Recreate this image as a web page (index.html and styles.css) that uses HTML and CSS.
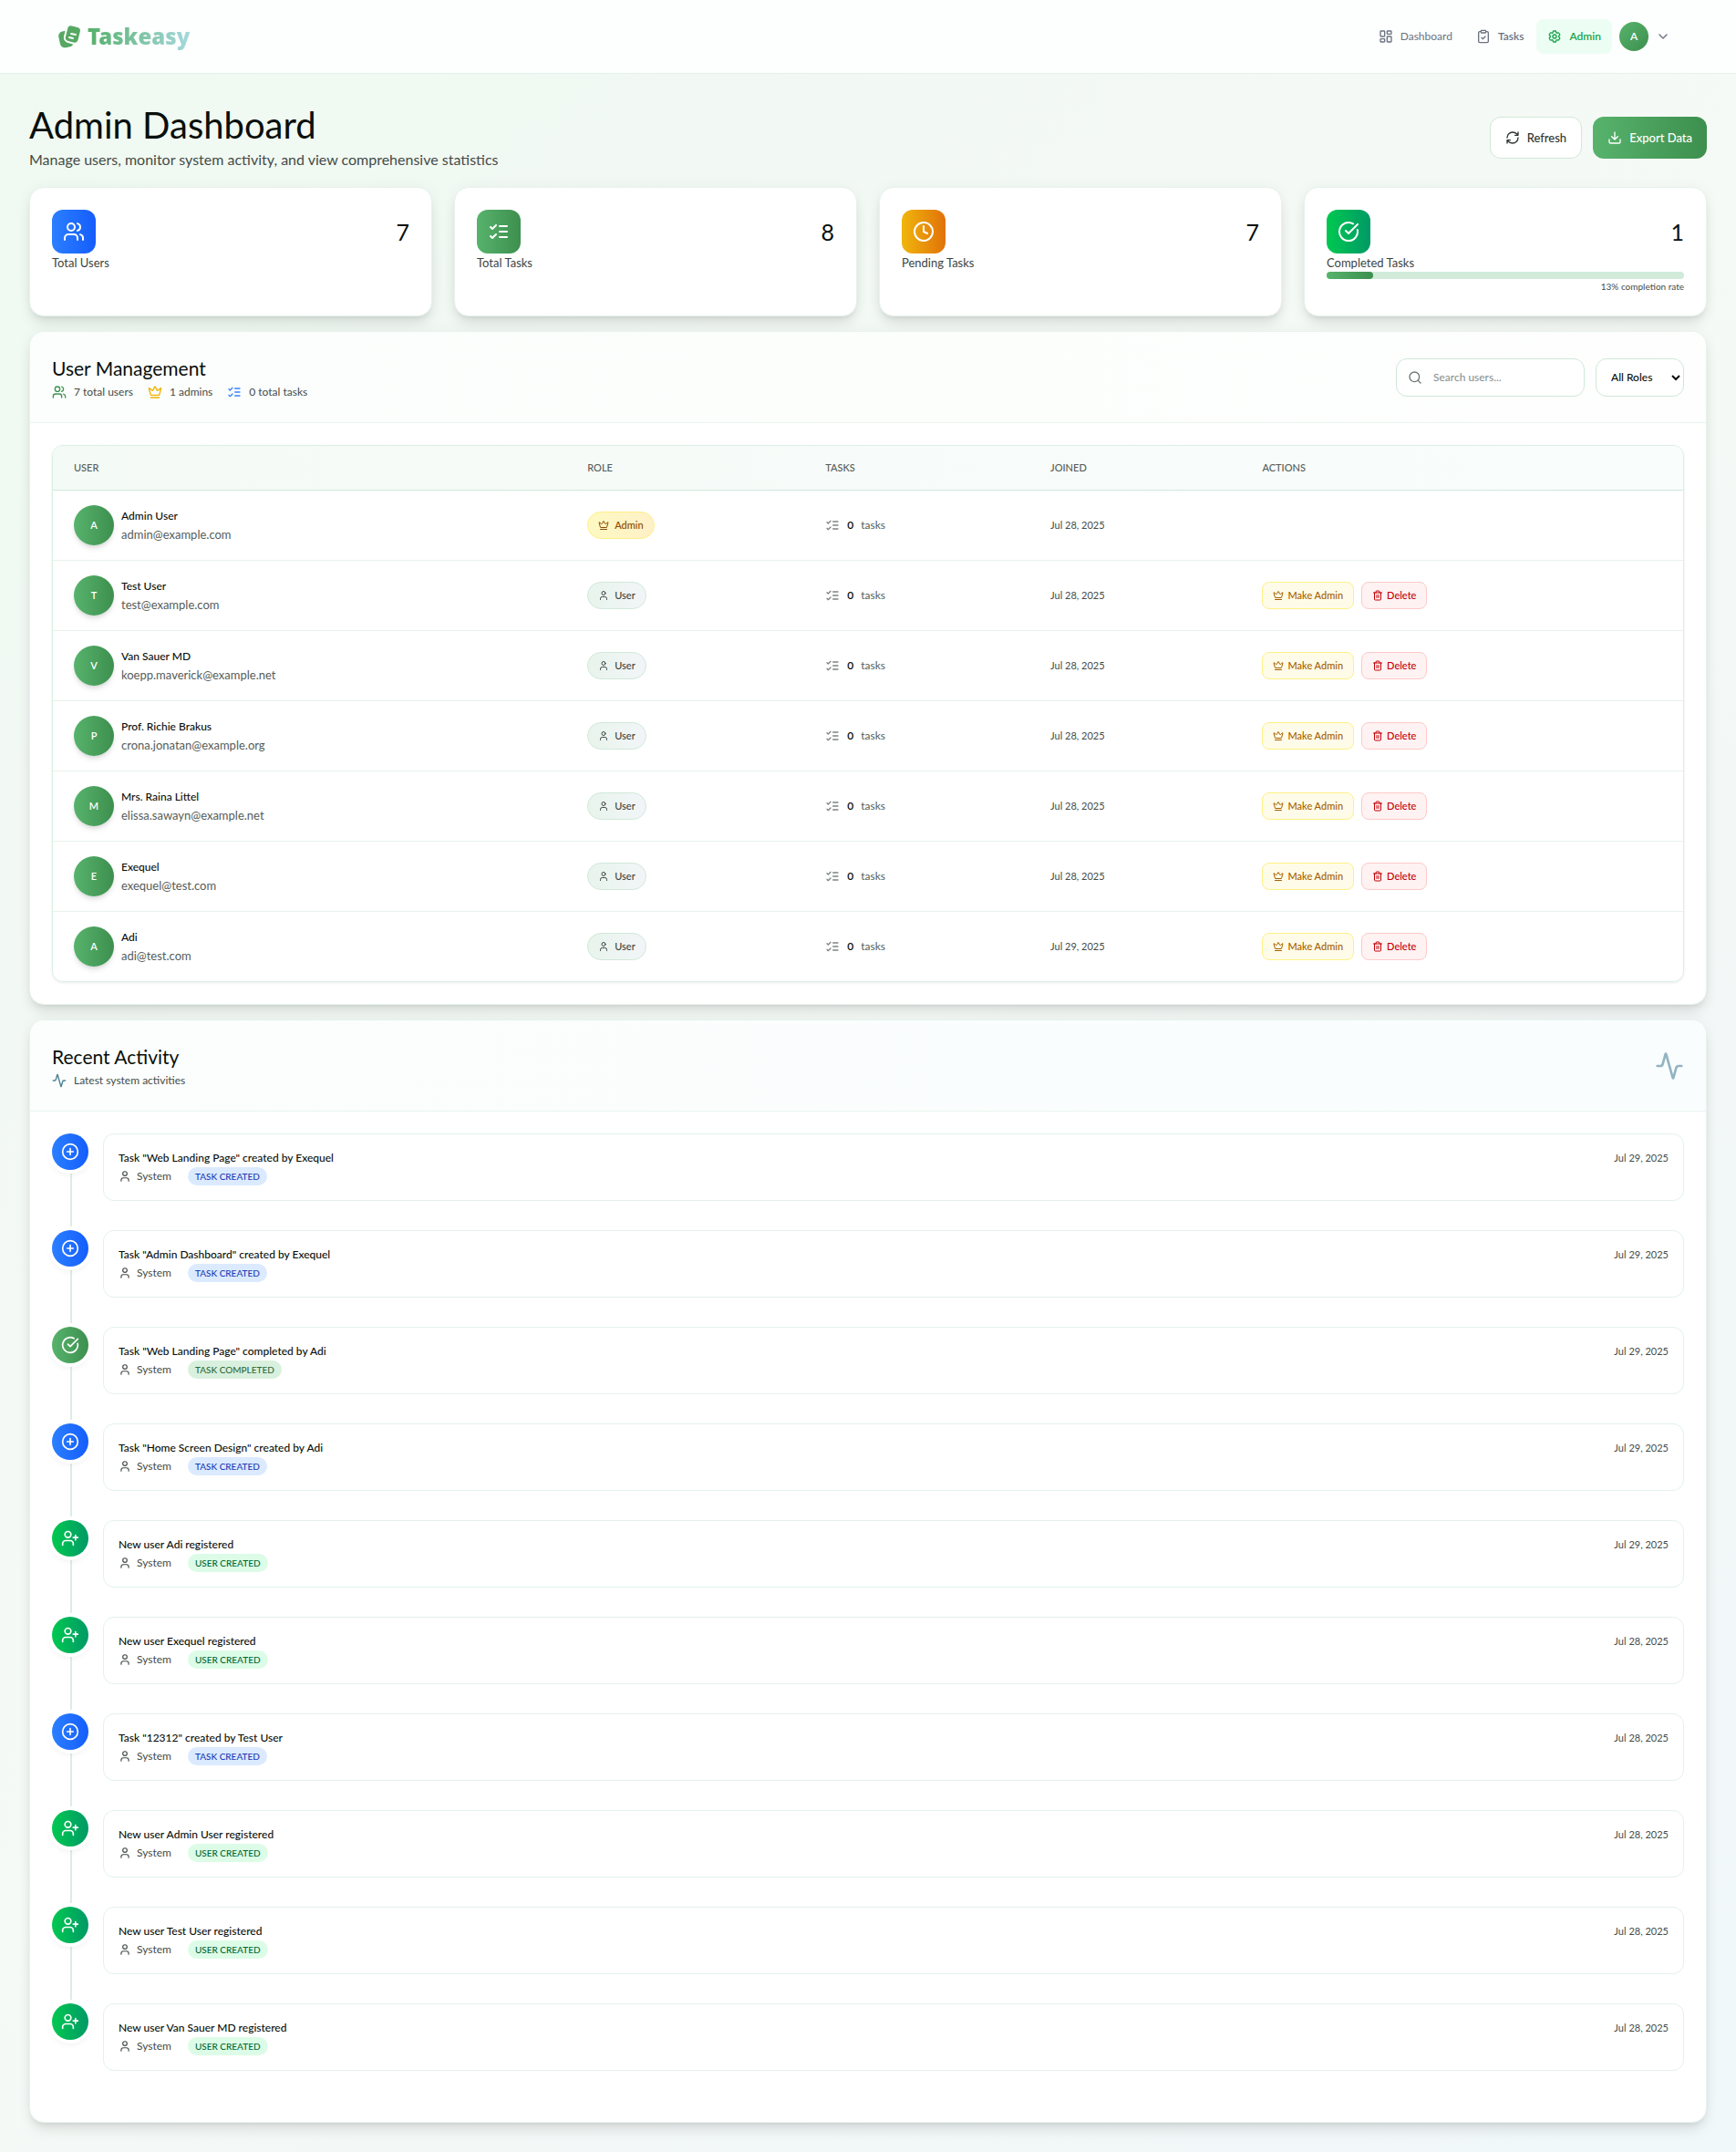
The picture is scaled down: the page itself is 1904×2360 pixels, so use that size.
FILE: index.html
```html
<!DOCTYPE html>
<html lang="en">
<head>
<meta charset="utf-8">
<meta name="viewport" content="width=device-width, initial-scale=1">
<title>Taskeasy - Admin Dashboard</title>
<link rel="stylesheet" href="styles.css">
</head>
<body>
<svg class="sprite" aria-hidden="true">
  <symbol id="users" viewBox="0 0 24 24"><path d="M16 21v-2a4 4 0 0 0-4-4H6a4 4 0 0 0-4 4v2"/><circle cx="9" cy="7" r="4"/><path d="M22 21v-2a4 4 0 0 0-3-3.87M16 3.13a4 4 0 0 1 0 7.75"/></symbol>
  <symbol id="user" viewBox="0 0 24 24"><path d="M19 21v-2a4 4 0 0 0-4-4H9a4 4 0 0 0-4 4v2"/><circle cx="12" cy="7" r="4"/></symbol>
  <symbol id="user-plus" viewBox="0 0 24 24"><path d="M16 21v-2a4 4 0 0 0-4-4H6a4 4 0 0 0-4 4v2"/><circle cx="9" cy="7" r="4"/><path d="M19 8v6M22 11h-6"/></symbol>
  <symbol id="list" viewBox="0 0 24 24"><path d="m3 17 2 2 4-4M3 7l2 2 4-4M13 6h8M13 12h8M13 18h8"/></symbol>
  <symbol id="clock" viewBox="0 0 24 24"><circle cx="12" cy="12" r="10"/><path d="M12 6v6l4 2"/></symbol>
  <symbol id="check" viewBox="0 0 24 24"><path d="M21.801 10A10 10 0 1 1 17 3.335"/><path d="m9 11 3 3L22 4"/></symbol>
  <symbol id="plus" viewBox="0 0 24 24"><circle cx="12" cy="12" r="10"/><path d="M8 12h8M12 8v8"/></symbol>
  <symbol id="crown" viewBox="0 0 24 24"><path d="M11.562 3.266a.5.5 0 0 1 .876 0L15.39 8.87a1 1 0 0 0 1.516.294L21.183 5.5a.5.5 0 0 1 .798.519l-2.834 10.246a1 1 0 0 1-.956.734H5.81a1 1 0 0 1-.957-.734L2.02 6.02a.5.5 0 0 1 .798-.519l4.276 3.664a1 1 0 0 0 1.516-.294zM5 21h14"/></symbol>
  <symbol id="trash" viewBox="0 0 24 24"><path d="M3 6h18M19 6v14a2 2 0 0 1-2 2H7a2 2 0 0 1-2-2V6M8 6V4a2 2 0 0 1 2-2h4a2 2 0 0 1 2 2v2M10 11v6M14 11v6"/></symbol>
  <symbol id="activity" viewBox="0 0 24 24"><path d="M22 12h-2.48a2 2 0 0 0-1.93 1.46l-2.35 8.36a.25.25 0 0 1-.48 0L9.24 2.18a.25.25 0 0 0-.48 0l-2.35 8.36A2 2 0 0 1 4.49 12H2"/></symbol>
  <symbol id="search" viewBox="0 0 24 24"><circle cx="11" cy="11" r="8"/><path d="m21 21-4.3-4.3"/></symbol>
  <symbol id="refresh" viewBox="0 0 24 24"><path d="M3 12a9 9 0 0 1 9-9 9.75 9.75 0 0 1 6.74 2.74L21 8M21 3v5h-5M21 12a9 9 0 0 1-9 9 9.75 9.75 0 0 1-6.74-2.74L3 16M8 16H3v5"/></symbol>
  <symbol id="download" viewBox="0 0 24 24"><path d="M21 15v4a2 2 0 0 1-2 2H5a2 2 0 0 1-2-2v-4M7 10l5 5 5-5M12 15V3"/></symbol>
  <symbol id="dashboard" viewBox="0 0 24 24"><rect x="3" y="3" width="7" height="9" rx="1"/><rect x="14" y="3" width="7" height="5" rx="1"/><rect x="14" y="12" width="7" height="9" rx="1"/><rect x="3" y="16" width="7" height="5" rx="1"/></symbol>
  <symbol id="clipboard" viewBox="0 0 24 24"><rect x="8" y="2" width="8" height="4" rx="1"/><path d="M16 4h2a2 2 0 0 1 2 2v14a2 2 0 0 1-2 2H6a2 2 0 0 1-2-2V6a2 2 0 0 1 2-2h2M9 14l2 2 4-4"/></symbol>
  <symbol id="gear" viewBox="0 0 24 24"><path d="M9.594 3.94c.09-.542.56-.94 1.11-.94h2.593c.55 0 1.02.398 1.11.94l.213 1.281c.063.374.313.686.645.87.074.04.147.083.22.127.325.196.72.257 1.075.124l1.217-.456a1.125 1.125 0 0 1 1.37.49l1.296 2.247a1.125 1.125 0 0 1-.26 1.431l-1.003.827c-.293.241-.438.613-.43.992a7.723 7.723 0 0 1 0 .255c-.008.378.137.75.43.991l1.004.827c.424.35.534.955.26 1.43l-1.298 2.247a1.125 1.125 0 0 1-1.369.491l-1.217-.456c-.355-.133-.75-.072-1.076.124a6.47 6.47 0 0 1-.22.128c-.331.183-.581.495-.644.869l-.213 1.281c-.09.543-.56.94-1.11.94h-2.594c-.55 0-1.019-.398-1.11-.94l-.213-1.281c-.062-.374-.312-.686-.644-.87a6.52 6.52 0 0 1-.22-.127c-.325-.196-.72-.257-1.076-.124l-1.217.456a1.125 1.125 0 0 1-1.369-.49l-1.297-2.247a1.125 1.125 0 0 1 .26-1.431l1.004-.827c.292-.24.437-.613.43-.991a6.932 6.932 0 0 1 0-.255c.007-.38-.138-.751-.43-.992l-1.004-.827a1.125 1.125 0 0 1-.26-1.43l1.297-2.247a1.125 1.125 0 0 1 1.37-.491l1.216.456c.356.133.751.072 1.076-.124.072-.044.146-.086.22-.128.332-.183.582-.495.644-.869l.214-1.28Z"/><circle cx="12" cy="12" r="3"/></symbol>
  <symbol id="chevron" viewBox="0 0 24 24"><path d="m6 9 6 6 6-6"/></symbol>
</svg>

<header class="topbar">
  <a class="brand" href="#">
    <svg class="brand-mark" viewBox="0 0 26 26" aria-hidden="true">
      <rect class="mark-fill" x="1" y="7" width="15" height="18" rx="5" transform="rotate(-12 8 16)"/>
      <rect class="mark-front" x="8" y="1" width="16" height="19" rx="5" transform="rotate(14 16 10)"/>
      <path class="mark-lines" d="m14 10 5 1M12 14l4 1"/>
    </svg>
    <span class="brand-name">Taskeasy</span>
  </a>
  <nav class="nav">
    <a class="nav-link" href="#"><svg class="icon"><use href="#dashboard"/></svg>Dashboard</a>
    <a class="nav-link strong" href="#"><svg class="icon"><use href="#clipboard"/></svg>Tasks</a>
    <a class="nav-link active" href="#"><svg class="icon"><use href="#gear"/></svg>Admin</a>
    <button class="profile" type="button" aria-label="Account menu"><span class="profile-avatar">A</span><svg class="icon"><use href="#chevron"/></svg></button>
  </nav>
</header>

<main class="page">
  <section class="intro">
    <div>
      <h1>Admin Dashboard</h1>
      <p>Manage users, monitor system activity, and view comprehensive statistics</p>
    </div>
    <div class="intro-actions">
      <button class="btn" type="button"><svg class="icon"><use href="#refresh"/></svg>Refresh</button>
      <button class="btn primary" type="button"><svg class="icon"><use href="#download"/></svg>Export Data</button>
    </div>
  </section>

  <section class="stats">
    <article class="stat">
      <div class="stat-top"><span class="stat-icon blue"><svg class="icon-lg"><use href="#users"/></svg></span><span class="stat-value">7</span></div>
      <div class="stat-label">Total Users</div>
    </article>
    <article class="stat">
      <div class="stat-top"><span class="stat-icon green"><svg class="icon-lg"><use href="#list"/></svg></span><span class="stat-value">8</span></div>
      <div class="stat-label">Total Tasks</div>
    </article>
    <article class="stat">
      <div class="stat-top"><span class="stat-icon amber"><svg class="icon-lg"><use href="#clock"/></svg></span><span class="stat-value">7</span></div>
      <div class="stat-label">Pending Tasks</div>
    </article>
    <article class="stat">
      <div class="stat-top"><span class="stat-icon emerald"><svg class="icon-lg"><use href="#check"/></svg></span><span class="stat-value">1</span></div>
      <div class="stat-label">Completed Tasks</div>
      <div class="bar"><div class="bar-fill" style="width:13%"></div></div>
      <div class="bar-note">13% completion rate</div>
    </article>
  </section>

  <section class="card">
    <div class="card-head">
      <div>
        <h2>User Management</h2>
        <div class="meta">
          <span class="meta-item"><svg class="icon c-green"><use href="#users"/></svg>7 total users</span>
          <span class="meta-item"><svg class="icon c-yellow"><use href="#crown"/></svg>1 admins</span>
          <span class="meta-item"><svg class="icon c-blue"><use href="#list"/></svg>0 total tasks</span>
        </div>
      </div>
      <div class="filters">
        <label class="search"><svg class="icon"><use href="#search"/></svg><input type="text" placeholder="Search users..." aria-label="Search users"></label>
        <select class="role-filter" aria-label="Filter by role"><option>All Roles</option><option>Admin</option><option>User</option></select>
      </div>
    </div>
    <div class="card-body">
      <div class="table-wrap">
        <table>
          <colgroup><col class="col-user"><col class="col-role"><col class="col-tasks"><col class="col-joined"><col></colgroup>
          <thead><tr><th>USER</th><th>ROLE</th><th>TASKS</th><th>JOINED</th><th>ACTIONS</th></tr></thead>
          <tbody>
            <tr>
              <td><div class="person"><span class="avatar">A</span><div><div class="name">Admin User</div><div class="email">admin@example.com</div></div></div></td>
              <td><span class="role admin"><svg class="icon-sm"><use href="#crown"/></svg>Admin</span></td>
              <td><div class="count"><svg class="icon"><use href="#list"/></svg><b>0</b>tasks</div></td>
              <td class="date">Jul 28, 2025</td>
              <td></td>
            </tr>
            <tr>
              <td><div class="person"><span class="avatar">T</span><div><div class="name">Test User</div><div class="email">test@example.com</div></div></div></td>
              <td><span class="role"><svg class="icon-sm"><use href="#user"/></svg>User</span></td>
              <td><div class="count"><svg class="icon"><use href="#list"/></svg><b>0</b>tasks</div></td>
              <td class="date">Jul 28, 2025</td>
              <td><div class="actions"><button class="act promote" type="button"><svg class="icon-sm"><use href="#crown"/></svg>Make Admin</button><button class="act delete" type="button"><svg class="icon-sm"><use href="#trash"/></svg>Delete</button></div></td>
            </tr>
            <tr>
              <td><div class="person"><span class="avatar">V</span><div><div class="name">Van Sauer MD</div><div class="email">koepp.maverick@example.net</div></div></div></td>
              <td><span class="role"><svg class="icon-sm"><use href="#user"/></svg>User</span></td>
              <td><div class="count"><svg class="icon"><use href="#list"/></svg><b>0</b>tasks</div></td>
              <td class="date">Jul 28, 2025</td>
              <td><div class="actions"><button class="act promote" type="button"><svg class="icon-sm"><use href="#crown"/></svg>Make Admin</button><button class="act delete" type="button"><svg class="icon-sm"><use href="#trash"/></svg>Delete</button></div></td>
            </tr>
            <tr>
              <td><div class="person"><span class="avatar">P</span><div><div class="name">Prof. Richie Brakus</div><div class="email">crona.jonatan@example.org</div></div></div></td>
              <td><span class="role"><svg class="icon-sm"><use href="#user"/></svg>User</span></td>
              <td><div class="count"><svg class="icon"><use href="#list"/></svg><b>0</b>tasks</div></td>
              <td class="date">Jul 28, 2025</td>
              <td><div class="actions"><button class="act promote" type="button"><svg class="icon-sm"><use href="#crown"/></svg>Make Admin</button><button class="act delete" type="button"><svg class="icon-sm"><use href="#trash"/></svg>Delete</button></div></td>
            </tr>
            <tr>
              <td><div class="person"><span class="avatar">M</span><div><div class="name">Mrs. Raina Littel</div><div class="email">elissa.sawayn@example.net</div></div></div></td>
              <td><span class="role"><svg class="icon-sm"><use href="#user"/></svg>User</span></td>
              <td><div class="count"><svg class="icon"><use href="#list"/></svg><b>0</b>tasks</div></td>
              <td class="date">Jul 28, 2025</td>
              <td><div class="actions"><button class="act promote" type="button"><svg class="icon-sm"><use href="#crown"/></svg>Make Admin</button><button class="act delete" type="button"><svg class="icon-sm"><use href="#trash"/></svg>Delete</button></div></td>
            </tr>
            <tr>
              <td><div class="person"><span class="avatar">E</span><div><div class="name">Exequel</div><div class="email">exequel@test.com</div></div></div></td>
              <td><span class="role"><svg class="icon-sm"><use href="#user"/></svg>User</span></td>
              <td><div class="count"><svg class="icon"><use href="#list"/></svg><b>0</b>tasks</div></td>
              <td class="date">Jul 28, 2025</td>
              <td><div class="actions"><button class="act promote" type="button"><svg class="icon-sm"><use href="#crown"/></svg>Make Admin</button><button class="act delete" type="button"><svg class="icon-sm"><use href="#trash"/></svg>Delete</button></div></td>
            </tr>
            <tr>
              <td><div class="person"><span class="avatar">A</span><div><div class="name">Adi</div><div class="email">adi@test.com</div></div></div></td>
              <td><span class="role"><svg class="icon-sm"><use href="#user"/></svg>User</span></td>
              <td><div class="count"><svg class="icon"><use href="#list"/></svg><b>0</b>tasks</div></td>
              <td class="date">Jul 29, 2025</td>
              <td><div class="actions"><button class="act promote" type="button"><svg class="icon-sm"><use href="#crown"/></svg>Make Admin</button><button class="act delete" type="button"><svg class="icon-sm"><use href="#trash"/></svg>Delete</button></div></td>
            </tr>
          </tbody>
        </table>
      </div>
    </div>
  </section>

  <section class="card">
    <div class="card-head teal">
      <div>
        <h2>Recent Activity</h2>
        <div class="meta"><span class="meta-item"><svg class="icon c-teal"><use href="#activity"/></svg>Latest system activities</span></div>
      </div>
      <svg class="icon-xl"><use href="#activity"/></svg>
    </div>
    <ol class="card-body timeline">
      <li class="event">
        <div class="rail"><span class="dot blue"><svg class="icon-md"><use href="#plus"/></svg></span></div>
        <div class="entry"><div><div class="entry-title">Task "Web Landing Page" created by Exequel</div><div class="entry-meta"><svg class="icon-person"><use href="#user"/></svg><span>System</span><span class="tag">TASK CREATED</span></div></div><time>Jul 29, 2025</time></div>
      </li>
      <li class="event">
        <div class="rail"><span class="dot blue"><svg class="icon-md"><use href="#plus"/></svg></span></div>
        <div class="entry"><div><div class="entry-title">Task "Admin Dashboard" created by Exequel</div><div class="entry-meta"><svg class="icon-person"><use href="#user"/></svg><span>System</span><span class="tag">TASK CREATED</span></div></div><time>Jul 29, 2025</time></div>
      </li>
      <li class="event">
        <div class="rail"><span class="dot green"><svg class="icon-md"><use href="#check"/></svg></span></div>
        <div class="entry"><div><div class="entry-title">Task "Web Landing Page" completed by Adi</div><div class="entry-meta"><svg class="icon-person"><use href="#user"/></svg><span>System</span><span class="tag done">TASK COMPLETED</span></div></div><time>Jul 29, 2025</time></div>
      </li>
      <li class="event">
        <div class="rail"><span class="dot blue"><svg class="icon-md"><use href="#plus"/></svg></span></div>
        <div class="entry"><div><div class="entry-title">Task "Home Screen Design" created by Adi</div><div class="entry-meta"><svg class="icon-person"><use href="#user"/></svg><span>System</span><span class="tag">TASK CREATED</span></div></div><time>Jul 29, 2025</time></div>
      </li>
      <li class="event">
        <div class="rail"><span class="dot emerald"><svg class="icon-md"><use href="#user-plus"/></svg></span></div>
        <div class="entry"><div><div class="entry-title">New user Adi registered</div><div class="entry-meta"><svg class="icon-person"><use href="#user"/></svg><span>System</span><span class="tag joined">USER CREATED</span></div></div><time>Jul 29, 2025</time></div>
      </li>
      <li class="event">
        <div class="rail"><span class="dot emerald"><svg class="icon-md"><use href="#user-plus"/></svg></span></div>
        <div class="entry"><div><div class="entry-title">New user Exequel registered</div><div class="entry-meta"><svg class="icon-person"><use href="#user"/></svg><span>System</span><span class="tag joined">USER CREATED</span></div></div><time>Jul 28, 2025</time></div>
      </li>
      <li class="event">
        <div class="rail"><span class="dot blue"><svg class="icon-md"><use href="#plus"/></svg></span></div>
        <div class="entry"><div><div class="entry-title">Task "12312" created by Test User</div><div class="entry-meta"><svg class="icon-person"><use href="#user"/></svg><span>System</span><span class="tag">TASK CREATED</span></div></div><time>Jul 28, 2025</time></div>
      </li>
      <li class="event">
        <div class="rail"><span class="dot emerald"><svg class="icon-md"><use href="#user-plus"/></svg></span></div>
        <div class="entry"><div><div class="entry-title">New user Admin User registered</div><div class="entry-meta"><svg class="icon-person"><use href="#user"/></svg><span>System</span><span class="tag joined">USER CREATED</span></div></div><time>Jul 28, 2025</time></div>
      </li>
      <li class="event">
        <div class="rail"><span class="dot emerald"><svg class="icon-md"><use href="#user-plus"/></svg></span></div>
        <div class="entry"><div><div class="entry-title">New user Test User registered</div><div class="entry-meta"><svg class="icon-person"><use href="#user"/></svg><span>System</span><span class="tag joined">USER CREATED</span></div></div><time>Jul 28, 2025</time></div>
      </li>
      <li class="event">
        <div class="rail"><span class="dot emerald"><svg class="icon-md"><use href="#user-plus"/></svg></span></div>
        <div class="entry"><div><div class="entry-title">New user Van Sauer MD registered</div><div class="entry-meta"><svg class="icon-person"><use href="#user"/></svg><span>System</span><span class="tag joined">USER CREATED</span></div></div><time>Jul 28, 2025</time></div>
      </li>
    </ol>
  </section>
</main>
</body>
</html>
```
FILE: styles.css
```css
* { box-sizing: border-box; }

body {
  margin: 0;
  min-height: 100vh;
  font-family: Lato, "Open Sans", sans-serif;
  font-size: 13px;
  line-height: 20px;
  color: #0a0f0b;
  background: linear-gradient(135deg, #effaf1 0%, #f2f8f4 25%, #f5faf7 50%, #f2f7f7 75%, #f1f8fa 100%);
}

h1, h2, p, ol { margin: 0; padding: 0; }
h1, h2 { font-weight: 400; }
button, input, select { font: inherit; color: inherit; }
a { color: inherit; text-decoration: none; }

.sprite { display: none; }
.icon, .icon-sm, .icon-md, .icon-lg, .icon-xl, .icon-person {
  flex: none;
  fill: none;
  stroke: currentColor;
  stroke-width: 2;
  stroke-linecap: round;
  stroke-linejoin: round;
}
.icon { width: 16px; height: 16px; }
.icon-sm { width: 12px; height: 12px; }
.icon-person { width: 14px; height: 14px; }
.icon-md { width: 20px; height: 20px; }
.icon-lg { width: 24px; height: 24px; }
.icon-xl { width: 32px; height: 32px; color: #93b4c2; }

/* Top bar */
.topbar {
  display: flex;
  align-items: center;
  justify-content: space-between;
  padding: 20px 64px;
  background: #fdfefe;
  border-bottom: 1px solid #e3f2ea;
}
.brand { display: flex; align-items: center; gap: 6px; }
.brand-mark { width: 26px; height: 26px; }
.mark-fill { fill: #56a863; }
.mark-front { fill: #56a863; stroke: #fdfefe; stroke-width: 2; }
.mark-lines { fill: none; stroke: #fdfefe; stroke-width: 2; stroke-linecap: round; }
.brand-name {
  font: 900 24px/32px "Noto Sans", sans-serif;
  background: linear-gradient(90deg, #55b06a, #a5d8dc);
  background-clip: text;
  color: transparent;
}
.nav { display: flex; align-items: center; gap: 2px; font-size: 12px; }
.nav-link {
  display: flex;
  align-items: center;
  gap: 8px;
  height: 38px;
  padding: 0 12px;
  border-radius: 8px;
  color: #6b7280;
}
.nav-link.strong { font-weight: 600; }
.nav-link.active { font-weight: 600; color: #16a34a; background: #ecfdf3; }
.profile {
  display: flex;
  align-items: center;
  gap: 8px;
  height: 40px;
  padding: 0 8px 0 6px;
  border: 0;
  background: none;
  color: #6b7280;
}
.profile-avatar {
  display: grid;
  place-items: center;
  width: 32px;
  height: 32px;
  border-radius: 50%;
  color: #fff;
  font-size: 12px;
  font-weight: 600;
  background: linear-gradient(135deg, #57b36c, #3d8f4e);
}

/* Page */
.page { display: flex; flex-direction: column; gap: 16px; padding: 32px; }
.intro { display: flex; align-items: center; justify-content: space-between; }
.intro h1 { font-size: 40px; line-height: 48px; }
.intro p { font-size: 16px; line-height: 28px; color: #454b47; }
.intro-actions { display: flex; gap: 12px; }
.btn {
  display: flex;
  align-items: center;
  gap: 8px;
  height: 46px;
  padding: 0 16px;
  border: 1px solid #d0e8d9;
  border-radius: 12px;
  background: #fff;
  color: #2e3430;
  font-weight: 500;
}
.btn.primary { border: 0; color: #fff; background: linear-gradient(90deg, #57b36c, #3d8f4e); }

.blue { background: linear-gradient(90deg, #2b7fff, #155dfc); }
.green { background: linear-gradient(90deg, #57b36c, #3d8f4e); }
.amber { background: linear-gradient(90deg, #f0b60d, #e17209); }
.emerald { background: linear-gradient(90deg, #00c950, #009966); }

.stats { display: grid; grid-template-columns: repeat(4, 1fr); gap: 24px; }
.stat, .card {
  background: #fff;
  border: 1px solid #e6f3eb;
  border-radius: 16px;
  box-shadow: 0 10px 15px -3px rgba(0, 0, 0, .1), 0 4px 6px -4px rgba(0, 0, 0, .1), 0 0 16px rgba(20, 60, 35, .04);
}
.stat { padding: 24px; }
.stat-top { display: flex; align-items: center; justify-content: space-between; }
.stat-icon { display: grid; place-items: center; width: 48px; height: 48px; border-radius: 12px; color: #fff; }
.stat-value { font-size: 25px; line-height: 32px; }
.stat-label { color: #3d4440; }
.bar { height: 8px; border-radius: 4px; background: #d1ead9; }
.bar-fill { height: 8px; border-radius: 4px; background: linear-gradient(90deg, #57b36c, #3d8f4e); }
.bar-note { font-size: 10px; line-height: 16px; text-align: right; color: #454b47; }

/* Cards */
.card-head {
  display: flex;
  align-items: center;
  justify-content: space-between;
  height: 100px;
  padding: 0 24px;
  border-bottom: 1px solid #e8f5ef;
  border-radius: 15px 15px 0 0;
  background: linear-gradient(90deg, #fbfefc, #fdfefd);
}
.card-head.teal { background: linear-gradient(90deg, #fbfefc, #fafdfe); }
.card-head h2 { font-size: 21px; line-height: 32px; }
.meta { display: flex; gap: 16px; font-size: 12px; color: #454b47; }
.meta-item { display: flex; align-items: center; gap: 8px; }
.c-green { color: #3f9352; }
.c-yellow { color: #f0b100; }
.c-blue { color: #3b82f6; }
.c-teal { color: #4b8197; }
.card-body { padding: 24px; }

.filters { display: flex; gap: 12px; font-size: 12px; }
.search, .role-filter {
  height: 42px;
  border: 1px solid #d0e8d9;
  border-radius: 12px;
  background: #fff;
}
.search { display: flex; align-items: center; gap: 12px; width: 207px; padding: 0 12px; color: #6f7572; }
.search input { flex: 1; min-width: 0; padding: 0; border: 0; outline: 0; background: none; }
.search input::placeholder { color: #858b88; }
.role-filter { width: 97px; padding: 0 0 0 12px; font-weight: 500; }

/* User table */
.table-wrap {
  overflow: hidden;
  border: 1px solid #dcefe4;
  border-radius: 12px;
  box-shadow: 0 1px 3px rgba(0, 0, 0, .08);
}
table { width: 100%; table-layout: fixed; border-collapse: separate; border-spacing: 0; }
.col-user { width: 31.5%; }
.col-role { width: 14.6%; }
.col-tasks { width: 13.8%; }
.col-joined { width: 13%; }
thead tr { background: linear-gradient(90deg, #f4faf6, #f7fbf9 50%, #f9fdfc); }
th {
  height: 49px;
  padding: 0 23px;
  border-bottom: 1px solid #d0e8dc;
  font-size: 11px;
  font-weight: 500;
  text-align: left;
  color: #565d59;
}
td { height: 77px; padding: 0 23px; border-bottom: 1px solid #e6f3ec; }
tbody tr:last-child td { height: 76px; border-bottom: 0; }
.person { display: flex; align-items: center; gap: 8px; }
.avatar {
  display: grid;
  place-items: center;
  width: 44px;
  height: 44px;
  border-radius: 50%;
  color: #fff;
  font-size: 11px;
  font-weight: 600;
  background: linear-gradient(90deg, #57b36c, #3d8f4e);
  box-shadow: 0 4px 6px -1px rgba(0, 0, 0, .12), 0 2px 4px -2px rgba(0, 0, 0, .1);
}
.name { font-size: 12px; font-weight: 500; }
.email { color: #565d59; }
.role, .act {
  display: inline-flex;
  align-items: center;
  height: 30px;
  padding: 0 11px;
  border: 1px solid;
  font-size: 11px;
  font-weight: 500;
}
.role {
  gap: 6px;
  border-radius: 15px;
  border-color: #d0e8d9;
  color: #3d4440;
  background: linear-gradient(90deg, #e8f4ec, #f2f5f8);
}
.role.admin { border-color: #fff085; color: #894b00; background: linear-gradient(90deg, #fef9c2, #fef0c7); }
.count { display: flex; align-items: center; gap: 8px; font-size: 12px; color: #565d59; }
.count .icon { color: #7d8480; }
.count b { font-weight: 600; color: #0a0f0b; }
.date { font-size: 11px; color: #454b47; }
.actions { display: flex; gap: 8px; }
.act { gap: 4px; border-radius: 8px; }
.promote { border-color: #fff085; color: #a65f00; background: #fefce8; }
.delete { border-color: #ffc9c9; color: #c10007; background: #fef2f2; }

/* Timeline */
.timeline { list-style: none; }
.event { display: flex; gap: 16px; padding-bottom: 32px; background: linear-gradient(#dceee3, #dceee3) 20px 44px / 2px calc(100% - 48px) no-repeat; }
.event:last-child { background: none; }
.rail { flex: none; width: 40px; }
.dot {
  display: grid;
  place-items: center;
  width: 40px;
  height: 40px;
  border-radius: 50%;
  color: #fff;
  box-shadow: 0 0 0 4px #fff, 0 4px 6px 2px rgba(0, 0, 0, .05);
}
.entry {
  flex: 1;
  display: flex;
  justify-content: space-between;
  padding: 16px;
  border: 1px solid #e3f2ea;
  border-radius: 12px;
}
.entry-title { font-size: 12px; font-weight: 500; }
.entry-meta { display: flex; align-items: center; font-size: 12px; gap: 6px; color: #454b47; }
.tag {
  margin-left: 12px;
  padding: 0 8px;
  border-radius: 10px;
  font-size: 10px;
  font-weight: 500;
  color: #193cb8;
  background: #dbeafe;
}
.tag.done { color: #2c6b3b; background: #d9f0de; }
.tag.joined { color: #016630; background: #dcfce7; }
time { font-size: 11px; color: #454b47; }
```
